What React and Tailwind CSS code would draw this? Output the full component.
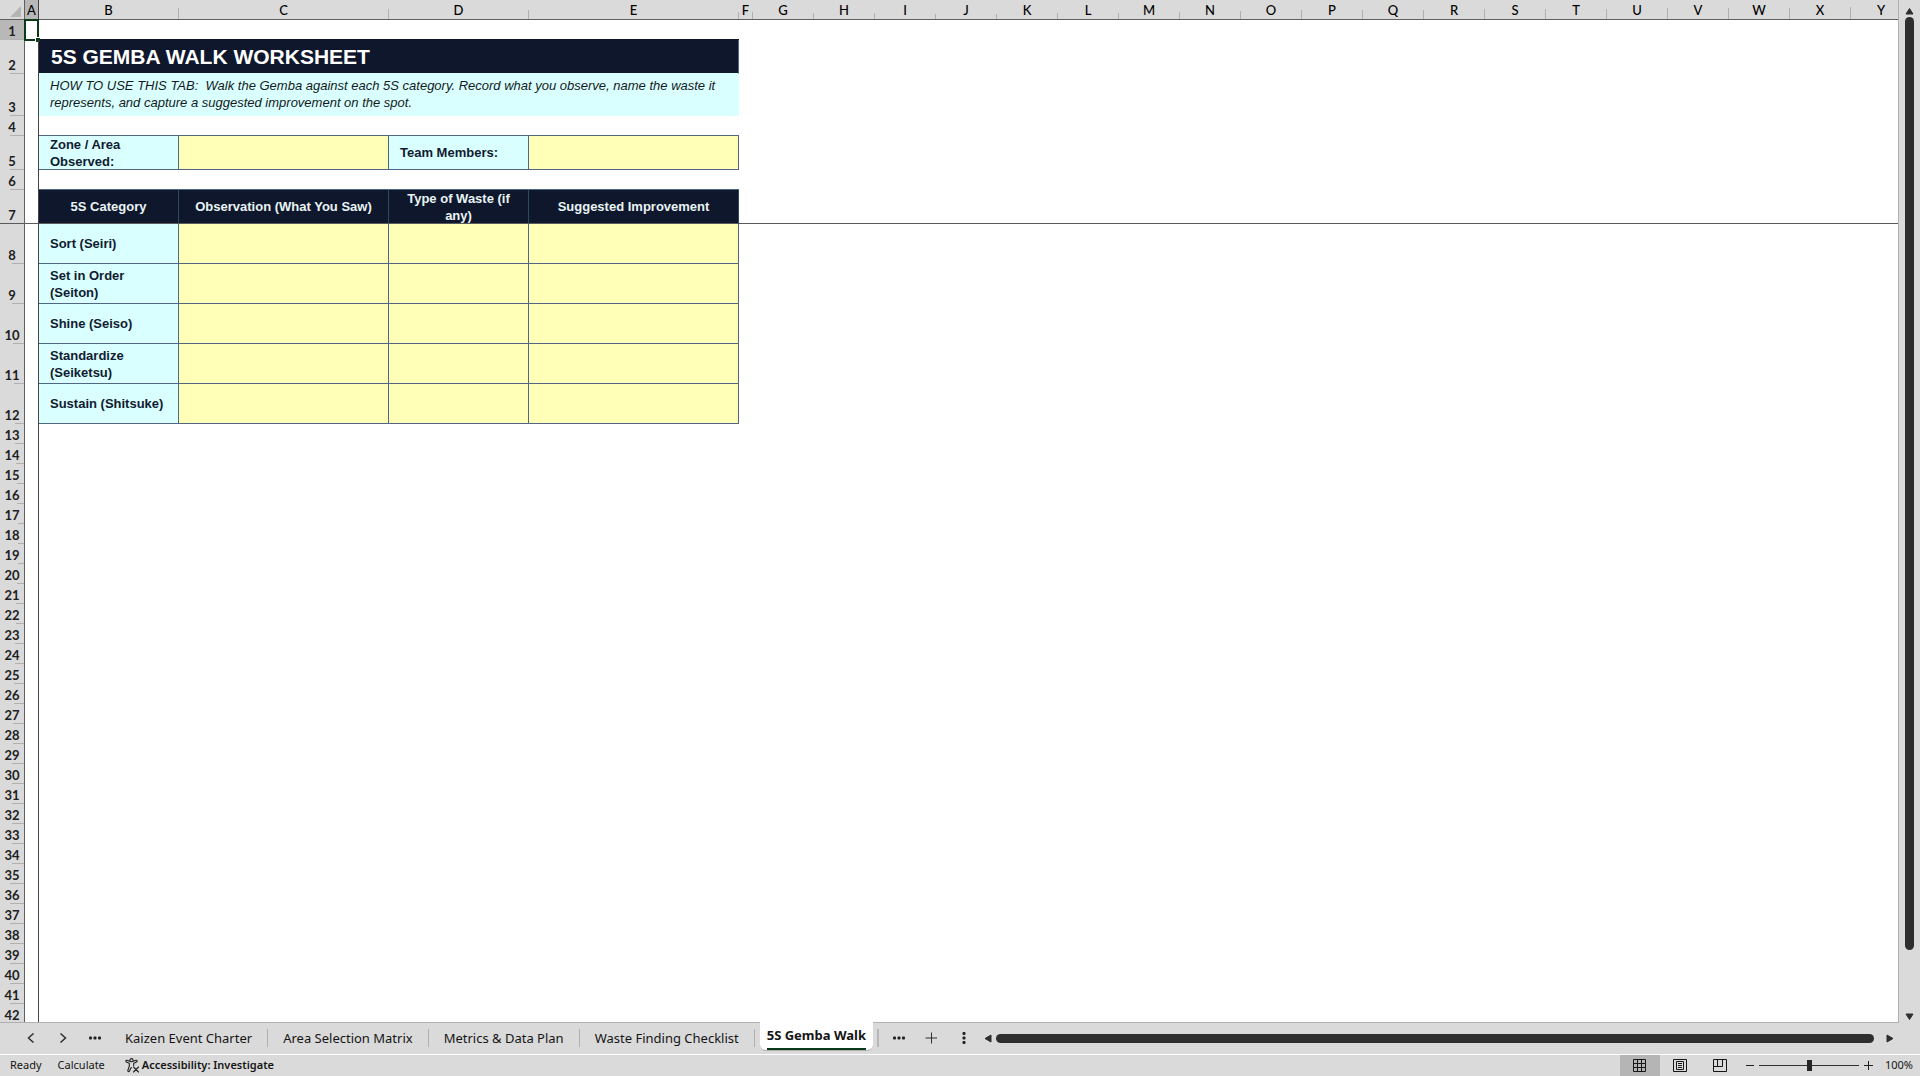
import React from 'react';
import clsx from 'clsx';

// tick is the length of the short separator drawn in the header strip
const COLUMNS = [
  { id: 'A', width: 14, tick: 19 },
  { id: 'B', width: 140, tick: 11 },
  { id: 'C', width: 210, tick: 10 },
  { id: 'D', width: 140, tick: 9 },
  { id: 'E', width: 210, tick: 7 },
  { id: 'F', width: 14, tick: 7 },
  { id: 'G', width: 61, tick: 6 },
  { id: 'H', width: 61, tick: 6 },
  { id: 'I', width: 61, tick: 5 },
  { id: 'J', width: 61, tick: 5 },
  { id: 'K', width: 61, tick: 6 },
  { id: 'L', width: 61, tick: 6 },
  { id: 'M', width: 61, tick: 7 },
  { id: 'N', width: 61, tick: 8 },
  { id: 'O', width: 61, tick: 9 },
  { id: 'P', width: 61, tick: 9 },
  { id: 'Q', width: 61, tick: 9 },
  { id: 'R', width: 61, tick: 10 },
  { id: 'S', width: 61, tick: 10 },
  { id: 'T', width: 61, tick: 10 },
  { id: 'U', width: 61, tick: 11 },
  { id: 'V', width: 61, tick: 11 },
  { id: 'W', width: 61, tick: 11 },
  { id: 'X', width: 61, tick: 12 },
  { id: 'Y', width: 61, tick: 12 },
];

const ROW_HEADER_WIDTH = 25;
const TABLE_WIDTH = COLUMNS.reduce((sum, col) => sum + col.width, ROW_HEADER_WIDTH);
const ROW_HEIGHTS = { 2: 34, 3: 42, 5: 34, 7: 34, 8: 40, 9: 40, 10: 40, 11: 40, 12: 40 };
const ROW_TICKS = { 8: 12, 9: 12, 10: 11, 11: 10, 12: 9, 13: 9, 14: 8, 15: 7, 16: 7, 17: 6, 18: 6, 19: 6, 20: 7, 21: 8, 22: 8, 23: 9, 24: 9, 25: 10, 26: 10, 27: 11, 28: 11 };
const ROWS = Array.from({ length: 42 }, (_, i) => ({
  n: i + 1,
  height: ROW_HEIGHTS[i + 1] || 20,
  tick: ROW_TICKS[i + 1] || (i < 7 ? 14 : i < 34 ? 12 : 14),
}));

const CATEGORIES = {
  8: 'Sort (Seiri)',
  9: 'Set in Order (Seiton)',
  10: 'Shine (Seiso)',
  11: 'Standardize (Seiketsu)',
  12: 'Sustain (Shitsuke)',
};

const TABS = ['Kaizen Event Charter', 'Area Selection Matrix', 'Metrics & Data Plan', 'Waste Finding Checklist'];

function LabelCell({ children }) {
  return (
    <td className="border-r border-b border-[#4f6784] bg-[#d9ffff] pr-1 pl-[11px] text-left font-bold text-[#111b31]">
      <div className="-my-px">{children}</div>
    </td>
  );
}

function HeadingCell({ children }) {
  return (
    <td className="border-r border-b border-r-[#2c4a60] border-b-[#5a5a5a] bg-[#0f172d] px-2 text-center font-bold text-[#e8f4f4]">
      <div className="-my-px">{children}</div>
    </td>
  );
}

function EntryCell() {
  return <td className="border-r border-b border-[#4f6784] bg-[#ffffb8]" />;
}

function ColumnHeader({ col }) {
  const active = col.id === 'A';
  return (
    <th scope="col" className={clsx('p-0 border-b border-[#606060] font-medium', active && 'bg-[#b8b8b8]')}>
      <div className="flex h-[19px] items-end">
        <span className="flex-1 text-center leading-[17px]">{col.id}</span>
        <span className={clsx('w-px', active ? 'bg-[#444]' : 'bg-[#b0b0b0]')} style={{ height: col.tick }} />
      </div>
    </th>
  );
}

function RowHeader({ row }) {
  return (
    <th
      scope="row"
      className={clsx('p-0 border-r border-[#606060] font-[Lato,sans-serif] text-[13px] font-bold text-[#202020]', row.n === 1 ? 'bg-[#b8b8b8]' : 'bg-[#dadada]')}
    >
      <div className="flex flex-col justify-end" style={{ height: row.height }}>
        <span className="text-center leading-4">{row.n}</span>
        <span
          className={clsx('h-px self-end', row.n === 7 ? 'w-full bg-[#5a5a5a]' : 'bg-[#b0b0b0]')}
          style={row.n === 7 ? undefined : { width: row.tick }}
        />
      </div>
    </th>
  );
}

function SheetCells({ n }) {
  if (n === 1) {
    return (
      <>
        <td colSpan={4} className="border-b border-[#0f172d]" />
        <td colSpan={20} />
      </>
    );
  }
  if (n === 2) {
    return (
      <>
        <td colSpan={4} className="border-r border-b border-r-[#4f6784] border-b-[#d9ffff] bg-[#0f172d] pl-3 text-[21px] leading-6 font-bold text-white">
          5S GEMBA WALK WORKSHEET
        </td>
        <td colSpan={20} />
      </>
    );
  }
  if (n === 3) {
    return (
      <>
        <td colSpan={4} className="bg-[#d9ffff] pr-2 pb-[3px] pl-[11px] whitespace-pre-wrap text-[#151a22] italic">
          {'HOW TO USE THIS TAB:  Walk the Gemba against each 5S category. Record what you observe, name the waste it represents, and capture a suggested improvement on the spot.'}
        </td>
        <td colSpan={20} />
      </>
    );
  }
  if (n === 4 || n === 6) {
    return (
      <>
        <td colSpan={4} className="border-b border-[#4f6784]" />
        <td colSpan={20} />
      </>
    );
  }
  if (n === 5) {
    return (
      <>
        <LabelCell>Zone / Area Observed:</LabelCell>
        <EntryCell />
        <LabelCell>Team Members:</LabelCell>
        <EntryCell />
        <td colSpan={20} />
      </>
    );
  }
  if (n === 7) {
    return (
      <>
        <HeadingCell>5S Category</HeadingCell>
        <HeadingCell>Observation (What You Saw)</HeadingCell>
        <HeadingCell>Type of Waste (if any)</HeadingCell>
        <HeadingCell>Suggested Improvement</HeadingCell>
        <td colSpan={20} className="border-b border-[#5a5a5a]" />
      </>
    );
  }
  if (CATEGORIES[n]) {
    return (
      <>
        <LabelCell>{CATEGORIES[n]}</LabelCell>
        <EntryCell />
        <EntryCell />
        <EntryCell />
        <td colSpan={20} />
      </>
    );
  }
  return <td colSpan={24} />;
}

function Sheet() {
  return (
    <div className="min-w-0 flex-1 overflow-hidden border-r border-b border-[#b0b0b0] bg-white">
      <table
        className="table-fixed border-separate border-spacing-0 font-['Liberation_Sans',sans-serif] text-[13px] leading-[17px]"
        style={{ width: TABLE_WIDTH }}
      >
        <colgroup>
          <col style={{ width: ROW_HEADER_WIDTH }} />
          {COLUMNS.map((col) => (
            <col key={col.id} style={{ width: col.width }} />
          ))}
        </colgroup>
        <thead className="bg-[#dadada] font-[Lato,sans-serif] text-[13px] text-black">
          <tr>
            <td className="border-r border-b border-[#606060] p-0">
              <svg className="mt-1 ml-[10px] block" width="12" height="12" aria-hidden="true">
                <path d="M11 0v11H0z" fill="#b5b5b5" />
              </svg>
            </td>
            {COLUMNS.map((col) => (
              <ColumnHeader key={col.id} col={col} />
            ))}
          </tr>
        </thead>
        <tbody>
          {ROWS.map((row) => (
            <tr key={row.n}>
              <RowHeader row={row} />
              <td className={clsx('relative border-r border-r-[#444] p-0', row.n === 7 && 'border-b border-b-[#5a5a5a]')}>
                {row.n === 1 && (
                  <div className="absolute -inset-x-px -top-px -bottom-px border-2 border-[#0a3a1a]">
                    <span className="absolute -right-[3px] -bottom-[3px] size-[5px] border-t border-l border-white bg-[#0a3a1a]" />
                  </div>
                )}
              </td>
              <SheetCells n={row.n} />
            </tr>
          ))}
        </tbody>
      </table>
    </div>
  );
}

function VerticalScroll() {
  return (
    <div className="flex w-[21px] flex-col items-center pt-1">
      <button type="button" aria-label="Scroll up" className="h-[13px]">
        <svg className="block" width="9" height="8" viewBox="0 0 9 8">
          <path d="M4.500 1.500L8 7H1z" fill="#2e2e2e" stroke="#2e2e2e" strokeLinejoin="round" />
        </svg>
      </button>
      <div className="flex w-[9px] flex-1 flex-col">
        <div className="flex-[47] rounded-full bg-[#2e2e2e]" />
        <div className="flex-[3]" />
      </div>
      <button type="button" aria-label="Scroll down" className="h-[13px]">
        <svg className="block" width="9" height="8" viewBox="0 0 9 8">
          <path d="M4.500 6.500L8 1H1z" fill="#2e2e2e" stroke="#2e2e2e" strokeLinejoin="round" />
        </svg>
      </button>
    </div>
  );
}

function Dots({ vertical }) {
  return (
    <svg className={clsx('block', vertical && 'rotate-90')} width="12" height="4" viewBox="0 0 12 4" fill="#202020">
      <rect x="0" y="0.500" width="3" height="3" rx="1" />
      <rect x="4.500" y="0.500" width="3" height="3" rx="1" />
      <rect x="9" y="0.500" width="3" height="3" rx="1" />
    </svg>
  );
}

function Chevron({ flip }) {
  return (
    <svg className={clsx('block', flip && 'rotate-180')} width="8" height="10" viewBox="0 0 8 10" fill="none" stroke="#303030" strokeWidth="1.500">
      <path d="M6.500 0.500L1.500 5l5 4.500" />
    </svg>
  );
}

function TabBar() {
  return (
    <nav className="flex h-8 items-center border-b border-white pb-px text-[13px] text-[#151515]" aria-label="Sheets">
      <div className="flex w-[110px] items-center pl-[27px]">
        <button type="button" aria-label="Previous sheet" className="w-[32px]"><Chevron /></button>
        <button type="button" aria-label="Next sheet" className="w-[30px]"><Chevron flip /></button>
        <button type="button" aria-label="More sheets"><Dots /></button>
      </div>
      {TABS.map((tab) => (
        <button key={tab} type="button" className="h-[18px] border-r border-[#b0b0b0] px-[15px] leading-[18px] whitespace-nowrap">
          {tab}
        </button>
      ))}
      <button type="button" className="-mt-px ml-[5px] flex h-[29px] self-start rounded-b-md border-b border-[#b0b0b0] bg-white px-[7px] pt-[3px] font-bold text-[#151515]">
        <span className="border-b-2 border-[#0a3a1a] leading-5 whitespace-nowrap">5S Gemba Walk</span>
      </button>
      <div className="ml-1 h-[18px] w-0.5 bg-[#b8b8b8]" />
      <button type="button" aria-label="All sheets" className="ml-[14px]"><Dots /></button>
      <button type="button" aria-label="Add sheet" className="ml-5">
        <svg className="block" width="12" height="12" stroke="#303030"><path d="M6.500 0.500v11M0.500 6h12" /></svg>
      </button>
      <button type="button" aria-label="Resize tabs" className="ml-[21px]"><Dots vertical /></button>
      <button type="button" aria-label="Scroll left" className="ml-[14px]">
        <svg className="block" width="8" height="9" viewBox="0 0 8 9">
          <path d="M1 4.500L7 1v7z" fill="#2e2e2e" stroke="#2e2e2e" strokeLinejoin="round" />
        </svg>
      </button>
      <div className="ml-1 h-[9px] flex-1 rounded-full bg-[#2e2e2e]" />
      <button type="button" aria-label="Scroll right" className="mr-[26px] ml-3">
        <svg className="block" width="8" height="9" viewBox="0 0 8 9">
          <path d="M7 4.500L1 1v7z" fill="#2e2e2e" stroke="#2e2e2e" strokeLinejoin="round" />
        </svg>
      </button>
    </nav>
  );
}

function StatusBar() {
  return (
    <footer className="flex h-[21px] items-center pl-[10px] text-[11px] text-[#151515]">
      <span>Ready</span>
      <span className="ml-4">Calculate</span>
      <button type="button" className="ml-5 flex items-center gap-[2px] font-semibold">
        <svg width="15" height="15" viewBox="0 0 15 15" fill="none" stroke="#202020" strokeWidth="1.100" strokeLinecap="round" strokeLinejoin="round">
          <circle cx="6.500" cy="2.200" r="1.600" />
          <path d="M4.800 3.300L2 2.300c-1.200-.3-1.600 1.200-.6 1.600L4.300 5.200v3l-1.500 4.200c-.3 1.200 1.200 1.600 1.600.6L6.300 9.500M8.200 3.300l2.800-1c1.200-.3 1.600 1.200.6 1.600L8.700 5.200v2.300" />
          <path d="M8.500 9l5 5M13.500 9l-5 5" />
        </svg>
        Accessibility: Investigate
      </button>
      <div className="ml-auto flex h-full items-center">
        <button type="button" aria-label="Normal view" className="flex h-full w-10 items-center justify-center bg-[#b5b5b5]">
          <svg width="13" height="13" fill="none" stroke="#151515">
            <path d="M0.500 0.500h12v12h-12zM4.500 0.500v12M8.500 0.500v12M0.500 4.500h12M0.500 8.500h12" />
          </svg>
        </button>
        <button type="button" aria-label="Page layout" className="flex w-10 justify-center">
          <svg width="14" height="13" fill="none" stroke="#151515">
            <path d="M0.500 0.500h13v12h-13zM3.500 2.500h7v8h-7zM5 4.500h4M5 6.500h4M5 8.500h4" />
          </svg>
        </button>
        <button type="button" aria-label="Page break preview" className="flex w-10 justify-center">
          <svg width="14" height="13" fill="none" stroke="#151515">
            <path d="M0.500 0.500h13v12h-13zM4.500 0.500v7M0.500 7.500h9M9.500 0.500v7" />
          </svg>
        </button>
        <button type="button" aria-label="Zoom out" className="ml-[6px]">
          <svg className="block" width="8" height="9" stroke="#202020"><path d="M0 4.500h8" /></svg>
        </button>
        <input
          type="range"
          aria-label="Zoom"
          min="0"
          max="100"
          defaultValue="51"
          className="mx-[5px] h-[11px] w-[100px] appearance-none bg-[linear-gradient(#303030,#303030)] bg-[length:100%_1px] bg-center bg-no-repeat [&::-webkit-slider-thumb]:h-[11px] [&::-webkit-slider-thumb]:w-[5px] [&::-webkit-slider-thumb]:appearance-none [&::-webkit-slider-thumb]:bg-[#262626]"
        />
        <button type="button" aria-label="Zoom in">
          <svg className="block" width="9" height="9" stroke="#202020"><path d="M0 4.500h9M4.500 0v9" /></svg>
        </button>
        <button type="button" className="mr-[7px] ml-3">100%</button>
      </div>
    </footer>
  );
}

export default function App() {
  return (
    <div className="flex h-screen flex-col overflow-hidden bg-[#dadada] font-['Noto_Sans','Open_Sans',sans-serif]">
      <main className="flex min-h-0 flex-1">
        <Sheet />
        <VerticalScroll />
      </main>
      <TabBar />
      <StatusBar />
    </div>
  );
}
